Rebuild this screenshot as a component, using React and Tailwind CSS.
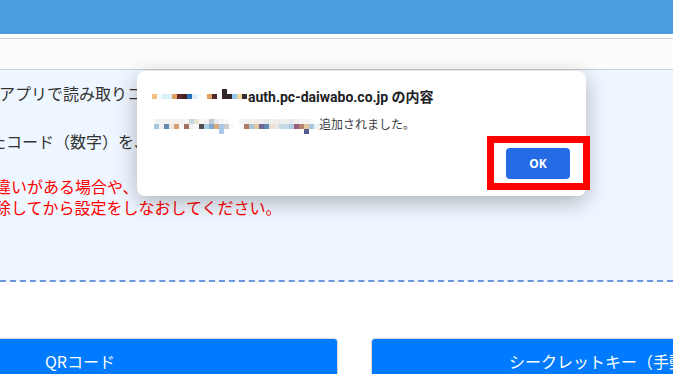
import React from 'react';

// mosaic blocks standing in for the blurred site name / item name
const titleBlocks = [
  '#f8c080', '#f6fbfe', '#d8f0f8', '#d8f0f8', '#e0a060', '#602828', '#402020', '#2870b8', '#e0f0f8', '#f6fbfe',
  '#ffffff', '#e0a060', '#502828', '#ffffff', '#302828', '#302828', '#90c8f0', '#f0d8a0', '#303030',
];

const msgTop = [
  '#f2f2f2', '#f0f0f0', '#f2efea', '#f2f2f2', '#f6f0e8', '#f2f2f2', '#f4f4f4', '#c8d8e0', '#e4e4d4', '#f8f8f8',
  '#f4f4f4', '#c0c8d0', '#e8ecf2', '#f4f4f4', '#f8f8f8', '#ffffff', '#ffffff', '#f4f4f4', '#f0f0f0', '#f6f0e8',
  '#f2ece4', '#eeeeee', '#e8e8e8', '#f0f0f0', '#f2ece4', '#ecf0f4', '#f0f0f0', '#e8e8ec', '#f0ece8', '#f4f4f4',
  '#f4f4f4', '#f8f8f8', '#ffffff',
];

const msgBottom = [
  '#a8c8e0', '#f0f0f0', '#6088b0', '#f0e8e0', '#d8a070', '#f8f8f8', '#a07060', '#f0f0f0', '#f8f8f8', '#505050',
  '#a8d0e8', '#80a8d0', '#d8a878', '#a8c8e8', '#c8d0c8', '#f8f8f8', '#ffffff', '#f8f8f8', '#b07860', '#a8c8d8',
  '#e0c8a0', '#706898', '#6088b0', '#e8e0d0', '#e8e8e8', '#c8d8e0', '#c0d8e8', '#b0c8e0', '#986078', '#b88070',
  '#e0c8a0', '#a8c8e0', '#e8f0f8',
];

const Mosaic = ({ rows, width, height, extra = [] }) => (
  <svg width={width} height={height} viewBox={`0 0 ${width} ${height}`} className="shrink-0 max-w-none">
    {rows.map((row, r) =>
      row.map((c, i) => <rect key={`${r}-${i}`} x={i * 5} y={row.y} width="5" height="5" fill={c} />)
    )}
    {extra.map((b, i) => (
      <rect key={`e-${i}`} x={b.x} y={b.y} width="5" height="5" fill={b.c} />
    ))}
  </svg>
);

const withY = (arr, y) => Object.assign([...arr], { y });

const App = () => {
  return (
    <div
      className="relative w-[673px] h-[374px] overflow-hidden bg-white"
      style={{ fontFamily: '"Noto Sans", "Noto Sans CJK JP", sans-serif' }}
    >
      {/* page header */}
      <div className="h-[34px] bg-[#4a9de0]"></div>
      <div className="h-[4px] bg-white"></div>
      <div className="h-[32px] bg-[#fcfcfc] border-y border-[#cfcfcf]"></div>

      {/* instructions box */}
      <div
        className="h-[212px] bg-[#eef6ff] border-b-2 border-dashed border-[#6b96dc] pt-[11px] text-[16px] whitespace-nowrap"
        style={{ fontFamily: '"Noto Sans CJK JP", sans-serif' }}
      >
        <p className="leading-6 text-[#333] -ml-[1px]">アプリで読み取りコードを読み取ってください。</p>
        <p className="leading-6 text-[#333] -ml-[10px] mt-[24px]">たコード（数字）を、下の入力欄に入力してください。</p>
        <div className="text-[#f00] leading-[21px] mt-[23px] -ml-[5px]">
          <p>違いがある場合や、アプリのアカウントを一度削</p>
          <p>除してから設定をしなおしてください。</p>
        </div>
      </div>

      {/* tabs */}
      <div
        className="-ml-[178px] w-[1065px] grid grid-cols-2 gap-[33px] mt-[56px]"
        style={{ fontFamily: '"Noto Sans CJK JP", sans-serif' }}
      >
        <div className="h-[60px] bg-[#007bff] border border-[#d8d8d8] rounded-t-[4px] pt-[10px] text-center text-white text-[16px] leading-6">
          QRコード
        </div>
        <div className="h-[60px] bg-[#007bff] border border-[#d8d8d8] rounded-t-[4px] pt-[10px] text-center text-white text-[16px] leading-6 whitespace-nowrap">
          シークレットキー（手動で入力）
        </div>
      </div>

      {/* alert dialog */}
      <div className="absolute left-[137px] top-[71px] w-[449px] h-[125px] bg-white rounded-[8px] shadow-[0_6px_22px_rgba(0,0,0,0.28)] pl-[15px] pr-[16px] pt-[16px]">
        <div className="flex items-start h-[20px]">
          <div className="mt-[2px] shrink-0">
            <Mosaic
              rows={[withY(titleBlocks, 5)]}
              width={95}
              height={10}
              extra={[{ x: 70, y: 0, c: '#302828' }]}
            />
          </div>
          <span
            className="ml-[1px] text-[14px] leading-5 font-bold text-[#202124] whitespace-nowrap"
            style={{ fontFamily: 'Roboto, "Noto Sans CJK JP", sans-serif' }}
          >
            auth.pc-daiwabo.co.jp の内容
          </span>
        </div>
        <div className="flex items-start h-[18px] mt-[9px]">
          <div className="mt-[3px] ml-[2px] shrink-0">
            <Mosaic
              rows={[withY(msgTop, 0), withY(msgBottom, 5)]}
              width={165}
              height={15}
              extra={[
                { x: 65, y: 10, c: '#a8c8e8' },
                { x: 150, y: 10, c: '#585890' },
              ]}
            />
          </div>
          <span className="text-[12px] leading-[18px] text-[#3c4043] whitespace-nowrap">追加されました。</span>
        </div>
        <div className="flex justify-end mt-[14px]">
          <button className="w-[64px] h-[31px] rounded-[4px] bg-[#256be6] text-white text-[12px] font-bold">OK</button>
        </div>
      </div>

      {/* annotation frame */}
      <div className="absolute left-[487px] top-[136px] w-[103px] h-[54px] border-[7px] border-[#ff0000]"></div>
    </div>
  );
};

export default App;
